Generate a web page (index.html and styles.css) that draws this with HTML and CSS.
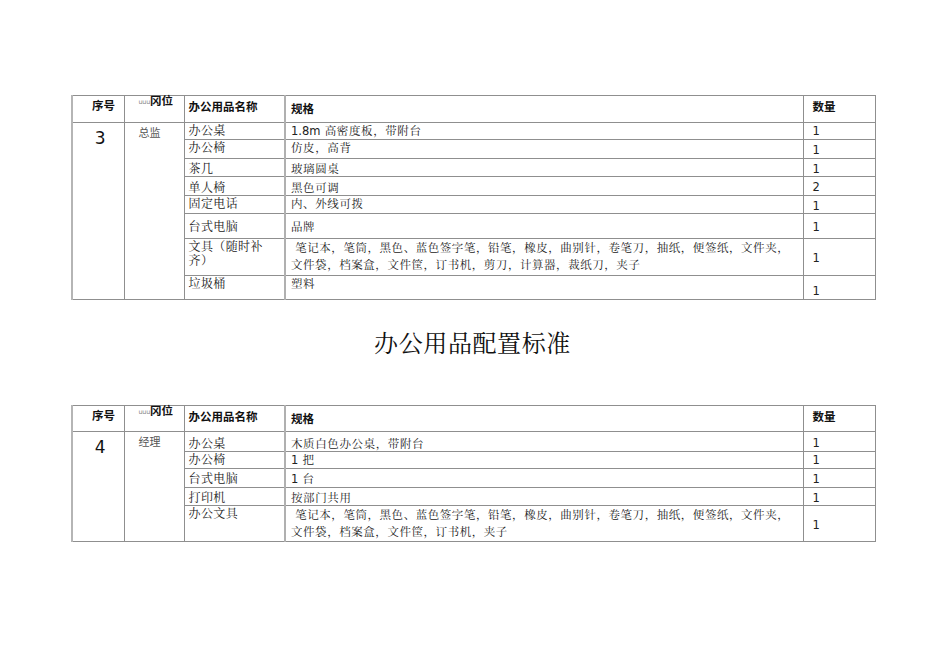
FILE: index.html
```html
<!DOCTYPE html>
<html lang="zh">
<head>
<meta charset="utf-8">
<title>办公用品配置标准</title>
<link rel="stylesheet" href="styles.css">
</head>
<body>
<div class="page">
  <table class="grid">
    <colgroup>
      <col class="c-no"><col class="c-post"><col class="c-name"><col class="c-spec"><col class="c-qty">
    </colgroup>
    <tr class="hd">
      <th class="th-no">序号</th>
      <th class="th-post"><span class="tiny">uuu</span>冈位</th>
      <th class="th-name">办公用品名称</th>
      <th class="th-spec">规格</th>
      <th class="th-qty">数量</th>
    </tr>
    <tr class="r17">
      <td class="no" rowspan="8">3</td>
      <td class="post" rowspan="8">总监</td>
      <td class="name">办公桌</td>
      <td class="spec"><span class="lat">1.8m</span> 高密度板，带附台</td>
      <td class="qty qb">1</td>
    </tr>
    <tr class="r19"><td class="name">办公椅</td><td class="spec">仿皮，高背</td><td class="qty qb">1</td></tr>
    <tr class="r18"><td class="name vb">茶几</td><td class="spec vb">玻璃圆桌</td><td class="qty">1</td></tr>
    <tr class="r19"><td class="name vb">单人椅</td><td class="spec vb">黑色可调</td><td class="qty">2</td></tr>
    <tr class="r18"><td class="name">固定电话</td><td class="spec">内、外线可拨</td><td class="qty">1</td></tr>
    <tr class="r25"><td class="name vm">台式电脑</td><td class="spec vm">品牌</td><td class="qty vm">1</td></tr>
    <tr class="r37"><td class="name">文具（随时补齐）</td><td class="spec long">&nbsp;笔记本，笔筒，黑色、蓝色签字笔，铅笔，橡皮，曲别针，卷笔刀，抽纸，便签纸，文件夹，文件袋，档案盒，文件筐，订书机，剪刀，计算器，裁纸刀，夹子</td><td class="qty vm">1</td></tr>
    <tr class="r24"><td class="name">垃圾桶</td><td class="spec">塑料</td><td class="qty qb">1</td></tr>
  </table>

  <h1 class="title">办公用品配置标准</h1>

  <table class="grid">
    <colgroup>
      <col class="c-no"><col class="c-post"><col class="c-name"><col class="c-spec"><col class="c-qty">
    </colgroup>
    <tr class="hd2">
      <th class="th-no">序号</th>
      <th class="th-post"><span class="tiny">uuu</span>冈位</th>
      <th class="th-name">办公用品名称</th>
      <th class="th-spec">规格</th>
      <th class="th-qty">数量</th>
    </tr>
    <tr class="r20">
      <td class="no" rowspan="5">4</td>
      <td class="post" rowspan="5">经理</td>
      <td class="name vb">办公桌</td>
      <td class="spec vb">木质白色办公桌，带附台</td>
      <td class="qty qb">1</td>
    </tr>
    <tr class="r17"><td class="name">办公椅</td><td class="spec"><span class="lat">1</span> 把</td><td class="qty qb">1</td></tr>
    <tr class="r19"><td class="name vm">台式电脑</td><td class="spec vm"><span class="lat">1</span> 台</td><td class="qty qb">1</td></tr>
    <tr class="r18"><td class="name vb">打印机</td><td class="spec vb">按部门共用</td><td class="qty">1</td></tr>
    <tr class="r36"><td class="name">办公文具</td><td class="spec long">&nbsp;笔记本，笔筒，黑色、蓝色签字笔，铅笔，橡皮，曲别针，卷笔刀，抽纸，便签纸，文件夹，文件袋，档案盒，文件筐，订书机，夹子</td><td class="qty vm">1</td></tr>
  </table>
</div>
</body>
</html>
```

FILE: styles.css
```css
html, body {
  margin: 0;
  padding: 0;
  background: #ffffff;
}

.page {
  padding: 95px 0 0 71px;
  width: 803px;
}

.grid {
  width: 803px;
  table-layout: fixed;
  border-collapse: collapse;
  border: 1px solid #8f8f8f;
  border-left: 2px solid #b5b5b5;
}

.c-no { width: 52px; }
.c-post { width: 60px; }
.c-name { width: 101px; }
.c-spec { width: 518px; }
.c-qty { width: 72px; }

th, td {
  border: 1px solid #8f8f8f;
  padding: 0;
  box-sizing: border-box;
  overflow: visible;
}

th {
  font-family: "Noto Sans CJK SC", sans-serif;
  font-weight: 700;
  font-size: 11.5px;
  color: #111;
  text-align: left;
  vertical-align: top;
  line-height: 14px;
}

.hd { height: 27px; }
.hd2 { height: 26px; }

.th-no { padding: 2px 0 0 19px; }
.th-post { padding: 0 0 0 14px; line-height: 9px; white-space: nowrap; }
.th-name { padding: 3px 0 0 4px; }
.th-spec { padding: 5px 0 0 5px; border-left: 2px solid #b0b0b0; }
.th-qty { padding: 3px 0 0 9px; }

.tiny {
  font-family: "DejaVu Sans", sans-serif;
  font-size: 6.5px;
  font-weight: 400;
  color: #888;
  letter-spacing: -0.3px;
  vertical-align: top;
  line-height: 9px;
  padding-top: 2px;
  display: inline-block;
}

td {
  font-family: "DejaVu Sans", "Noto Serif CJK SC", "Noto Sans CJK SC", serif;
  font-size: 11.5px;
  color: #222;
  line-height: 14px;
  vertical-align: top;
  text-align: left;
}

.r17 { height: 17px; }
.r18 { height: 18px; }
.r19 { height: 19px; }
.r20 { height: 20px; }
.r24 { height: 24px; }
.r25 { height: 25px; }
.r36 { height: 36px; }
.r37 { height: 37px; }

.no {
  font-family: "DejaVu Sans", sans-serif;
  font-size: 17px;
  color: #111;
  text-align: center;
  padding: 6px 0 0 4px;
  line-height: 18px;
}

.post {
  font-family: "Noto Sans CJK SC", sans-serif;
  font-size: 11px;
  color: #555;
  padding: 2px 0 0 14px;
}

.name {
  padding: 1px 6px 0 4px;
  font-size: 12px;
  letter-spacing: 0.4px;
  line-height: 14px;
}

.spec {
  padding: 1px 4px 0 5px;
  letter-spacing: 0.6px;
  border-left: 2px solid #b0b0b0;
}

.spec.long {
  line-height: 17px;
  letter-spacing: 0.55px;
  padding-top: 1px;
}

.qty {
  font-family: "DejaVu Sans", sans-serif;
  padding: 2px 0 0 9px;
  vertical-align: middle;
}

.qb { vertical-align: bottom; padding: 0 0 1px 9px; }
.vb { vertical-align: bottom; padding-top: 0; padding-bottom: 0; }
.vm { vertical-align: middle; }

.lat {
  font-family: "DejaVu Sans", sans-serif;
  letter-spacing: 0;
}

.title {
  margin: 29px 0 50px 0;
  height: 26px;
  line-height: 26px;
  font-family: "Noto Serif CJK SC", "Noto Sans CJK SC", serif;
  font-weight: 400;
  font-size: 24px;
  letter-spacing: 0.6px;
  color: #111;
  text-align: center;
}
```
